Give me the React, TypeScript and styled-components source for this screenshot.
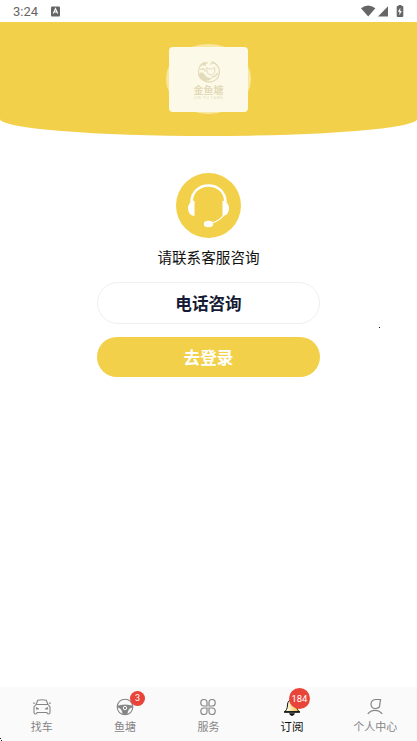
import React from "react";
import styled, { createGlobalStyle } from "styled-components";

const Global = createGlobalStyle`
  * { box-sizing: border-box; }
  body { margin: 0; background: #fff; font-family: Roboto, "Noto Sans CJK SC", sans-serif; overflow: hidden; }
  svg { display: block; }
`;
const Page = styled.div`
  position: relative;
  width: 417px;
  height: 741px;
  display: flex;
  flex-direction: column;
  background: #fff;
`;
const StatusBar = styled.header`
  height: 22px;
  flex: none;
  display: flex;
  align-items: center;
  padding: 1px 13px 0 13px;
  color: #666;
`;
const Clock = styled.span`
  font-size: 13px;
  line-height: 22px;
  width: 38px;
`;
const StatusIcons = styled.div`
  margin-left: auto;
  margin-top: -2px;
`;
const Hero = styled.section`
  height: 114px;
  flex: none;
  display: flex;
  justify-content: center;
  padding-top: 22px;
  background: #f3d04a;
  border-radius: 0 0 50% 50% / 0 0 17px 17px;
`;
const LogoHalo = styled.div`
  width: 85px;
  height: 70px;
  display: flex;
  justify-content: center;
  padding-top: 3px;
  border-radius: 50%;
  background: #f9e79e;
`;
const LogoCard = styled.div`
  width: 79px;
  height: 65px;
  border-radius: 4px;
  background: #fdf9e8;
  display: flex;
  flex-direction: column;
  align-items: center;
  padding-top: 13px;
  color: #e2dab8;
`;
const LogoName = styled.div`
  margin-top: 2px;
  font-size: 10px;
  line-height: 10px;
  font-weight: 700;
`;
const LogoLatin = styled.div`
  margin-top: -1px;
  font-size: 4px;
  line-height: 5px;
  letter-spacing: 0.6px;
`;
const Content = styled.main`
  flex: 1;
  display: flex;
  flex-direction: column;
  align-items: center;
  padding-top: 37px;
`;
const Prompt = styled.p`
  margin: 10px 0 13px;
  font-size: 14.6px;
  line-height: 21px;
  color: #111;
`;
const Button = styled.button<{ $primary?: boolean }>`
  width: 223px;
  height: ${(p) => (p.$primary ? 40 : 42)}px;
  margin: 0 0 13px;
  padding: 0;
  border: ${(p) => (p.$primary ? "0" : "1px solid #efeff0")};
  border-radius: 21px;
  background: ${(p) => (p.$primary ? "#f3d04a" : "#fff")};
  color: ${(p) => (p.$primary ? "#fff" : "#151b34")};
  font: 700 16.6px/24px "Noto Sans CJK SC", sans-serif;
`;
const TabBar = styled.nav`
  height: 54px;
  flex: none;
  display: grid;
  grid-template-columns: repeat(5, 1fr);
  background: #fafafa;
`;
const Tab = styled.div<{ $active?: boolean }>`
  display: flex;
  flex-direction: column;
  align-items: center;
  padding-top: 10px;
  color: ${(p) => (p.$active ? "#111" : "#858585")};
`;
const TabIcon = styled.div`
  position: relative;
  height: 22px;
`;
const TabLabel = styled.span<{ $active?: boolean }>`
  font-size: ${(p) => (p.$active ? 11.6 : 11)}px;
  line-height: 17px;
  white-space: nowrap;
`;
const Badge = styled.span<{ $wide?: boolean }>`
  position: absolute;
  left: ${(p) => (p.$wide ? 6 : 14)}px;
  top: ${(p) => (p.$wide ? -9 : -6)}px;
  width: ${(p) => (p.$wide ? 21 : 15)}px;
  height: ${(p) => (p.$wide ? 21 : 15)}px;
  border-radius: 50%;
  background: #e9443a;
  color: #fff;
  font-size: ${(p) => (p.$wide ? 9.5 : 9)}px;
  line-height: ${(p) => (p.$wide ? 21 : 15)}px;
  text-align: center;
`;
const Speck = styled.i<{ $x: number; $y: number }>`
  position: absolute;
  left: ${(p) => p.$x}px;
  top: ${(p) => p.$y}px;
  width: 1px;
  height: 1px;
  background: #111;
`;

const KeyboardIcon = () => (
  <svg width="9" height="11" viewBox="0 0 9 11">
    <rect y=".5" width="9" height="10" rx="1" fill="#666" />
    <path d="M2.3 7.6 4.5 2.7 6.7 7.6M3.1 6h2.8" fill="none" stroke="#fff" strokeWidth="1.1" />
  </svg>
);
const SystemIcons = () => (
  <svg width="43" height="14" viewBox="0 0 43 14" fill="#666">
    <path d="M0 4.2Q7-1.2 14.4 4.2L7.2 12.6Z" />
    <path d="M17 12.6 27 2.2V12.6Z" />
    <path fillRule="evenodd" d="M37.500 1h3v1h.8q1 0 1 1v9q0 1-1 1h-4.600q-1 0-1-1V3q0-1 1-1h.8ZM39.300 3.700l-2.400 4h1.500v3.500l2.400-4.200H39.300Z" />
  </svg>
);
const FishLogo = () => (
  <svg width="24" height="24" viewBox="0 0 24 24" fill="none" stroke="currentColor">
    <path d="M8 2.3C-.2 6-.5 17 6.5 20.5c6 3.5 14.500 .5 15.700-6.500C23.300 8 19.500 2.700 14.500 1.900" strokeWidth="1.2" />
    <path d="M3 5.500c2-3 6-4 8-2.500-2 .2-3 1.500-2.500 3-2-1.200-3-1-5.500-.5ZM2 14c2-2 4-1.500 5 0 1.500 3 4 4.500 7.500 4.300-3 3.700-8.500 3-11-.3Z" fill="currentColor" strokeWidth=".5" />
    <path d="M13 4.500c3-2.500 7-.8 7.500 2M9.500 7.500l2 1.300h4l2-1.500.3 4.200c-1 4-5.500 4.500-7.500 1Z" strokeWidth="1" />
    <path d="M4 9.500c2-1.500 4-.5 4 1.500M15 17c3 0 4-2 5.500-3.500" strokeWidth="1.400" strokeLinecap="round" />
  </svg>
);
const Headset = () => (
  <svg width="65" height="65" viewBox="0 0 65 65">
    <circle cx="32.500" cy="32.500" r="32.500" fill="#f3d04a" />
    <g fill="none" stroke="#fff">
      <path d="M15.500 29C16 7 49 7 49.500 29" strokeWidth="2.600" />
      <path d="M48.500 41Q45 47 36 50" strokeWidth="1.200" />
    </g>
    <path d="M18.500 27.500V43Q12 42 12 35.500T18.500 27.500ZM46.500 27.500V43Q53 42 53 35.500T46.500 27.500Z" fill="#fff" />
    <ellipse cx="32.500" cy="51" rx="4.700" ry="3.200" fill="#fff" />
  </svg>
);
const Car = () => (
  <svg width="20" height="20" viewBox="0 0 20 20" fill="none" stroke="currentColor" strokeWidth="1.100" strokeLinejoin="round">
    <path d="M4 7.500 5.800 3.300Q10 2.200 14.200 3.300L16 7.500M1 6l2 .3M17 6.300 19 6M4 7.500h12l2 2.400v5.600q0 1.500-1.500 1.500T15 15.500H5Q5 17 3.500 17T2 15.500V9.900Z" />
    <path d="M4 10.500 6.500 12H4M16 10.500 13.500 12H16" />
  </svg>
);
const Wheel = () => (
  <svg width="18" height="20" viewBox="0 0 18 20" fill="none" stroke="currentColor">
    <circle cx="9" cy="10" r="7.800" strokeWidth="1.100" />
    <path d="M1.500 8.800Q9 6.500 16.500 8.800v1.700q-4.500 0-5.200 6.500l-2.300.6-2.300-.6Q6 10.500 1.500 10.500Z" fill="currentColor" strokeWidth=".3" />
    <circle cx="9" cy="11" r="1.700" fill="currentColor" stroke="#fafafa" strokeWidth="1" />
  </svg>
);
const Services = () => (
  <svg width="18" height="20" viewBox="0 0 18 20" fill="none" stroke="currentColor" strokeWidth="1.200">
    <path d="M8 9H5Q1.800 9 1.800 5.700T5 2.500 8 5.700ZM10 9h3q3.200 0 3.200-3.300T13 2.500 10 5.700ZM8 11H5q-3.200 0-3.200 3.300T5 17.500 8 14.300ZM10 11h3q3.200 0 3.200 3.300T13 17.500 10 14.300Z" />
  </svg>
);
const Bell = () => (
  <svg width="18" height="20" viewBox="0 0 18 20">
    <defs>
      <linearGradient id="bell-fill">
        <stop offset=".2" stopColor="#fff6d8" />
        <stop offset="1" stopColor="#f3bd3b" />
      </linearGradient>
    </defs>
    <path d="M3.500 12.500Q4.500 10.500 4.500 8 4.500 3 9 3t4.500 5q0 2.500 1 4.500l1.700 2.300H1.800Z" fill="url(#bell-fill)" stroke="#111" strokeWidth="1" />
    <path d="M1 15h16" stroke="#111" strokeWidth="1.500" />
    <path d="M6 16.200h6q-1 2.800-3 2.800t-3-2.800Z" fill="#111" />
  </svg>
);
const Person = () => (
  <svg width="18" height="20" viewBox="0 0 18 20" fill="none" stroke="currentColor" strokeWidth="1.200">
    <path d="M14.500 2.500H9.500Q5 3 5 7.200T9.500 11.500 13.800 7.500ZM1.700 17Q4.500 13.300 9 13.300t7.300 3.700" />
  </svg>
);

const tabs = [
  { label: "找车", icon: <Car /> },
  { label: "鱼塘", icon: <Wheel />, badge: "3" },
  { label: "服务", icon: <Services /> },
  { label: "订阅", icon: <Bell />, badge: "184", active: true },
  { label: "个人中心", icon: <Person /> },
];

export default function App() {
  return (
    <Page>
      <Global />
      <StatusBar>
        <Clock>3:24</Clock>
        <KeyboardIcon />
        <StatusIcons><SystemIcons /></StatusIcons>
      </StatusBar>
      <Hero>
        <LogoHalo>
          <LogoCard>
            <FishLogo />
            <LogoName>金鱼塘</LogoName>
            <LogoLatin>JIN YU TANG</LogoLatin>
          </LogoCard>
        </LogoHalo>
      </Hero>
      <Content>
        <Headset />
        <Prompt>请联系客服咨询</Prompt>
        <Button>电话咨询</Button>
        <Button $primary>去登录</Button>
      </Content>
      <TabBar>
        {tabs.map((t) => (
          <Tab key={t.label} $active={t.active}>
            <TabIcon>
              {t.icon}
              {t.badge && <Badge $wide={t.badge.length > 1}>{t.badge}</Badge>}
            </TabIcon>
            <TabLabel $active={t.active}>{t.label}</TabLabel>
          </Tab>
        ))}
      </TabBar>
      <Speck $x={379} $y={327} />
      <Speck $x={0} $y={738} />
      <Speck $x={1} $y={740} />
    </Page>
  );
}
